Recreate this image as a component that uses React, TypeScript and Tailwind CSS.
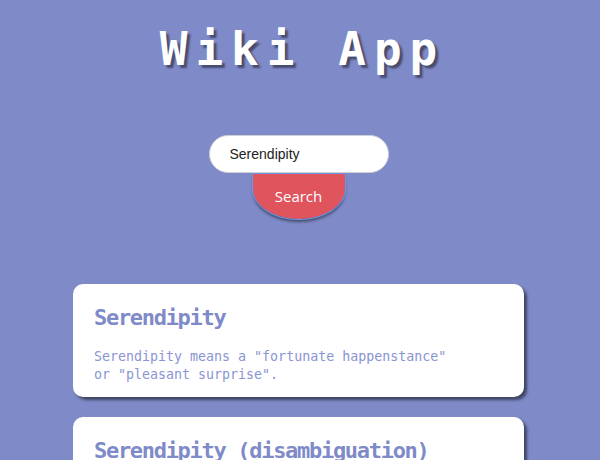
import React, { useState } from 'react';

const results = [
  {
    title: 'Serendipity',
    snippet: 'Serendipity means a "fortunate happenstance" or "pleasant surprise".',
  },
  {
    title: 'Serendipity (disambiguation)',
    snippet: 'Serendipity is the phenomenon of finding valuable or agreeable things by chance.',
  },
];

export default function App() {
  const [query, setQuery] = useState('Serendipity');

  return (
    <div className="min-h-[460px] bg-[#7f8ac8] flex flex-col items-center pr-[3px] pb-10 font-['DejaVu_Sans_Mono',monospace]">
      {/* Header */}
      <h1 className="mt-[22px] pl-[8px] text-[46px] leading-[54px] font-bold tracking-[8px] text-white [text-shadow:3px_3px_2px_rgba(0,0,0,0.45)]">
        Wiki App
      </h1>

      {/* Search */}
      <div className="mt-[59px] flex flex-col items-center">
        <input
          type="text"
          value={query}
          onChange={(e) => setQuery(e.target.value)}
          className="w-[180px] h-[38px] rounded-full border border-[#cfcfd8] bg-white pl-[20px] pr-4 text-[14px] text-[#222] font-['Liberation_Sans',sans-serif] outline-none"
        />
        <button className="mt-px w-[92px] h-[45px] bg-[#e0545e] text-white text-[15px] font-['Open_Sans',sans-serif] rounded-bl-[46px_30px] rounded-br-[46px_30px] shadow-[0_3px_3px_rgba(0,0,0,0.45)] outline outline-1 outline-[#6b97e8]">
          Search
        </button>
      </div>

      {/* Results */}
      <div className="mt-[65px] flex flex-col gap-5">
        {results.map((r) => (
          <div
            key={r.title}
            className="w-[451px] rounded-[10px] bg-white pt-5 pb-[13px] px-[21px] shadow-[3px_3px_3px_rgba(0,0,0,0.5)]"
          >
            <h2 className="text-[22px] leading-[28px] font-semibold tracking-[-1.3px] text-[#7f8ac8]">{r.title}</h2>
            <p className="mt-4 w-[360px] text-[13.3px] leading-[18px] text-[#8a94d2]">{r.snippet}</p>
          </div>
        ))}
      </div>
    </div>
  );
}
